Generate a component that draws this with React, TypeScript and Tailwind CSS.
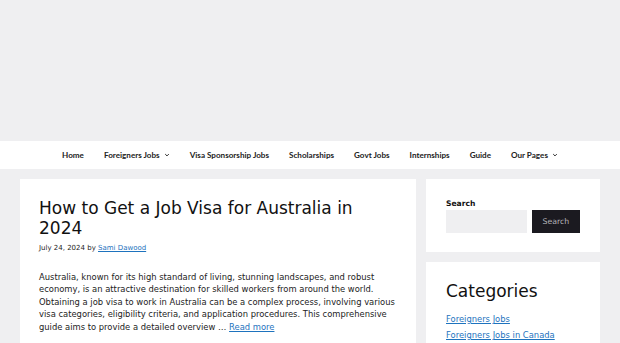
const navItems = [
  { label: "Home" },
  { label: "Foreigners Jobs", caret: true },
  { label: "Visa Sponsorship Jobs" },
  { label: "Scholarships" },
  { label: "Govt Jobs" },
  { label: "Internships" },
  { label: "Guide" },
  { label: "Our Pages", caret: true },
];

const Caret = () => (
  <svg width="6" height="6" viewBox="0 0 10 10" className="ml-[4px]">
    <path d="M2 3.5 L5 6.5 L8 3.5" fill="none" stroke="#222" strokeWidth="1.6" />
  </svg>
);

export default function App() {
  return (
    <div className="min-h-[343px] bg-[#efeff1] font-['DejaVu_Sans',sans-serif] text-[#222]">
      {/* header area */}
      <div className="h-[141px]" />

      {/* Nav */}
      <nav className="h-[28px] bg-white flex items-center justify-center font-['Lato',sans-serif] font-bold text-[8.1px] text-[#222]">
        {navItems.map((item) => (
          <div key={item.label} className="flex items-center px-[10px]">
            <span>{item.label}</span>
            {item.caret && <Caret />}
          </div>
        ))}
      </nav>

      {/* Content */}
      <div className="flex gap-[10px] px-[20px] pt-[10px]">
        <article className="w-[396px] bg-white pl-[19px] pr-[15px] pt-[19px] pb-[20px]">
          <h2 className="text-[17px] leading-[20px] text-[#111]">
            How to Get a Job Visa for Australia in 2024
          </h2>
          <div className="mt-[5px] text-[7px] leading-[11px] text-[#222]">
            July 24, 2024 by{" "}
            <a href="#" className="text-[#1e73be] underline">
              Sami Dawood
            </a>
          </div>
          <p className="mt-[17px] text-[8.4px] leading-[12.4px] text-[#222]">
            Australia, known for its high standard of living, stunning landscapes, and robust
            economy, is an attractive destination for skilled workers from around the world.
            Obtaining a job visa to work in Australia can be a complex process, involving various
            visa categories, eligibility criteria, and application procedures. This comprehensive
            guide aims to provide a detailed overview …{" "}
            <a href="#" className="text-[#1e73be] underline">
              Read more
            </a>
          </p>
        </article>

        <aside className="w-[174px] flex flex-col gap-[10px]">
          <div className="bg-white px-[20px] pt-[19px] pb-[19px]">
            <div className="text-[7.6px] font-bold leading-[11px] text-[#111]">Search</div>
            <div className="mt-[1px] flex gap-[5px]">
              <div className="w-[82px] h-[23px] bg-[#efeff1]" />
              <button className="w-[49px] h-[23px] bg-[#1b1a20] text-[#b5b5ba] text-[7.8px]">
                Search
              </button>
            </div>
          </div>
          <div className="bg-white px-[20px] pt-[19px] pb-[20px]">
            <h2 className="text-[17px] leading-[20px] text-[#111]">Categories</h2>
            <ul className="mt-[10px] text-[8.4px] leading-[16px]">
              <li>
                <a href="#" className="text-[#1e73be] underline">Foreigners Jobs</a>
              </li>
              <li>
                <a href="#" className="text-[#1e73be] underline">Foreigners Jobs in Canada</a>
              </li>
            </ul>
          </div>
        </aside>
      </div>
    </div>
  );
}
